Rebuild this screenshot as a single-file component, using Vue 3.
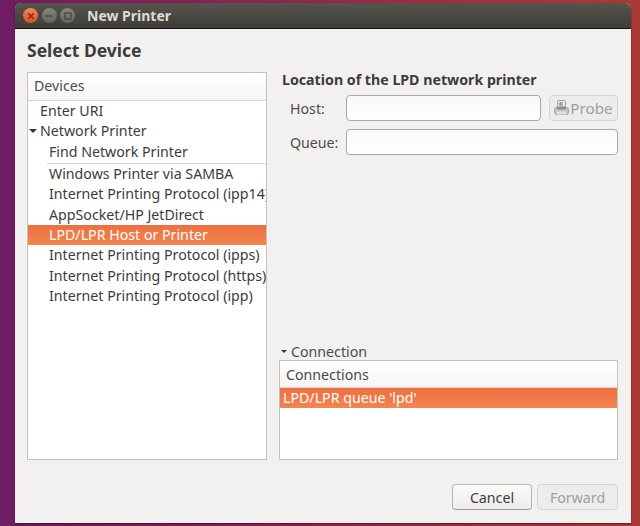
<script setup>
const devices = [
  { label: 'Windows Printer via SAMBA' },
  { label: 'Internet Printing Protocol (ipp14)' },
  { label: 'AppSocket/HP JetDirect' },
  { label: 'LPD/LPR Host or Printer', selected: true },
  { label: 'Internet Printing Protocol (ipps)' },
  { label: 'Internet Printing Protocol (https)' },
  { label: 'Internet Printing Protocol (ipp)' },
]
</script>

<template>
  <div class="desktop">
    <div class="window">
      <header class="titlebar">
        <div class="controls">
          <span class="ctl close">
            <svg width="8" height="8" viewBox="0 0 8 8"><path d="M1.2 1.2l5.6 5.6M6.8 1.2L1.2 6.800" stroke="#7a2f14" stroke-width="1.5" /></svg>
          </span>
          <span class="ctl">
            <svg width="8" height="8" viewBox="0 0 8 8"><path d="M.5 4h7" stroke="#45443f" stroke-width="1.4" /></svg>
          </span>
          <span class="ctl">
            <svg width="8" height="8" viewBox="0 0 8 8"><rect x="1" y="1" width="6" height="6" fill="none" stroke="#45443f" stroke-width="1.2" /></svg>
          </span>
        </div>
        <span class="wintitle">New Printer</span>
      </header>
      <main class="body">
        <h1 class="heading">Select Device</h1>
        <div class="columns">
          <section class="list devices">
            <div class="colhead">Devices</div>
            <div class="row top">Enter URI</div>
            <div class="row top">
              <span class="arrow tree"></span>Network Printer
            </div>
            <div class="row sub find">Find Network Printer</div>
            <div class="sep"></div>
            <div
              v-for="d in devices"
              :key="d.label"
              class="row sub"
              :class="{ selected: d.selected }"
            >{{ d.label }}</div>
          </section>
          <section class="right">
            <h2 class="loc">Location of the LPD network printer</h2>
            <div class="formrow">
              <label class="lab">Host:</label>
              <input class="entry host" type="text" />
              <button class="btn probe" disabled>
                <svg width="15" height="16" viewBox="0 0 15 16">
                  <rect x="3.500" y="0.500" width="8" height="7" rx="1.500" fill="#ecebe9" stroke="#a5a4a1" />
                  <circle cx="7" cy="4" r="2.200" fill="#a5a4a1" />
                  <rect x="0.500" y="7.500" width="14" height="7" rx="2" fill="#c4c3c0" stroke="#a5a4a1" />
                  <rect x="3" y="6.500" width="9" height="3" fill="#8f8e8b" />
                  <rect x="3" y="11.500" width="9" height="3" fill="#e4e3e1" />
                </svg>
                <span class="probe-text">Probe</span>
              </button>
            </div>
            <div class="formrow second">
              <label class="lab">Queue:</label>
              <input class="entry queue" type="text" />
            </div>
            <div class="spacer"></div>
            <div class="expander"><span class="arrow small"></span>Connection</div>
            <div class="list conns">
              <div class="colhead conn-head">Connections</div>
              <div class="row selected conn-row">LPD/LPR queue 'lpd'</div>
            </div>
          </section>
        </div>
        <footer class="actions">
          <button class="btn cancel">Cancel</button>
          <button class="btn forward" disabled>Forward</button>
        </footer>
      </main>
    </div>
  </div>
</template>

<style>
html, body { margin: 0; padding: 0; }
</style>

<style scoped>
.desktop {
  width: 640px;
  height: 526px;
  box-sizing: border-box;
  padding: 3px 0 0 15px;
  overflow: hidden;
  background: linear-gradient(90deg, #6e1c63 0%, #7f1f5a 20%, #a8343c 85%, #ab3a37 100%);
  font-family: "Noto Sans", "Open Sans", sans-serif;
  font-size: 14.2px;
  color: #3c3c3c;
}
.window {
  width: 616px;
  height: 520px;
  display: flex;
  flex-direction: column;
  background: #f2f1f0;
  border-radius: 6px 6px 0 0;
  box-shadow: 0 1px 2px rgba(40, 0, 30, 0.6);
}
.titlebar {
  height: 26px;
  box-sizing: border-box;
  flex: none;
  display: flex;
  align-items: center;
  padding-left: 8px;
  gap: 12px;
  background: linear-gradient(#56544d, #3e3d38);
  border-bottom: 1px solid #14130f;
  border-radius: 6px 6px 0 0;
}
.controls { display: flex; gap: 3.500px; }
.ctl {
  width: 15px;
  height: 15px;
  border-radius: 50%;
  background: linear-gradient(#86857f, #64635e);
  display: flex;
  align-items: center;
  justify-content: center;
}
.ctl.close { background: linear-gradient(#f5855a, #d9502a); }
.wintitle {
  font-weight: 700;
  font-size: 14px;
  color: #dfdbd2;
}
.body {
  flex: 1;
  min-height: 0;
  display: flex;
  flex-direction: column;
  padding: 10px 13px 13px 12px;
}
.heading {
  margin: 0 0 11px;
  font-size: 17.5px;
  line-height: 22px;
  font-weight: 700;
  color: #3c3c3c;
}
.columns {
  flex: 1;
  min-height: 0;
  display: flex;
  gap: 12px;
}
.list {
  background: #fff;
  border: 1px solid #c4c3bf;
  box-sizing: border-box;
  overflow: hidden;
}
.devices {
  width: 240px;
  flex: none;
}
.colhead {
  height: 28px;
  line-height: 26px;
  padding-left: 6px;
  color: #4a4a4a;
  background: linear-gradient(#ffffff, #f6f5f4);
  border-bottom: 1px solid #d8d7d3;
  box-sizing: border-box;
}
.row {
  height: 20.400px;
  line-height: 20px;
  white-space: nowrap;
  color: #3c3c3c;
}
.row.top { padding-left: 12px; position: relative; }
.row.sub { padding-left: 21px; }
.find { height: 21px; }
.sep {
  height: 1px;
  margin-left: 19px;
  background: #d8d7d3;
}
.selected {
  color: #fff;
  background: linear-gradient(#ec7040, #f5844f);
}
.row.selected { color: #fff; }
.arrow {
  display: inline-block;
  width: 0;
  height: 0;
  border-left: 4px solid transparent;
  border-right: 4px solid transparent;
  border-top: 4px solid #333;
}
.arrow.tree {
  position: absolute;
  left: 1px;
  top: 8px;
}
.arrow.small {
  border-left-width: 3px;
  border-right-width: 3px;
  border-top-width: 3px;
  margin: 0 4px 3px 2px;
  vertical-align: middle;
}
.right {
  flex: 1;
  min-width: 0;
  display: flex;
  flex-direction: column;
}
.loc {
  margin: 0 0 7px;
  padding-left: 3px;
  font-size: 14.2px;
  line-height: 16px;
  font-weight: 700;
  color: #3c3c3c;
}
.formrow {
  display: flex;
  align-items: center;
  gap: 8px;
}
.formrow.second { margin-top: 8px; }
.lab {
  width: 48px;
  margin-left: 11px;
  flex: none;
  color: #4c4c4c;
}
.entry {
  height: 26px;
  box-sizing: border-box;
  padding: 0 6px;
  border: 1px solid #a9a8a4;
  border-radius: 4px;
  background: linear-gradient(#f9f9f9, #ffffff);
  outline: none;
}
.host { width: 195px; }
.queue { width: 272px; }
.btn {
  font: inherit;
  box-sizing: border-box;
  height: 26px;
  border-radius: 4px;
  padding: 0;
}
.probe {
  width: 69px;
  display: flex;
  align-items: center;
  justify-content: center;
  gap: 1px;
  color: #a09f9c;
  background: #ececea;
  border: 1px solid #d5d4d0;
}
.probe-text { font-size: 15.200px; }
.spacer { flex: 1; }
.expander {
  height: 16px;
  line-height: 16px;
  color: #4c4c4c;
  white-space: nowrap;
}
.conns {
  height: 100px;
  flex: none;
}
.conn-head { height: 27px; line-height: 27px; }
.conn-row {
  padding-left: 3px;
}
.actions {
  flex: none;
  display: flex;
  justify-content: flex-end;
  gap: 5px;
  margin-top: 24px;
}
.cancel { width: 80px; }
.forward { width: 81px; }
.cancel {
  color: #3c3c3c;
  background: linear-gradient(#fbfbfa, #ecebe9);
  border: 1px solid #b5b4b0;
  border-bottom-color: #9c9b97;
}
.forward {
  color: #a09f9c;
  background: #ececea;
  border: 1px solid #d5d4d0;
}
</style>
